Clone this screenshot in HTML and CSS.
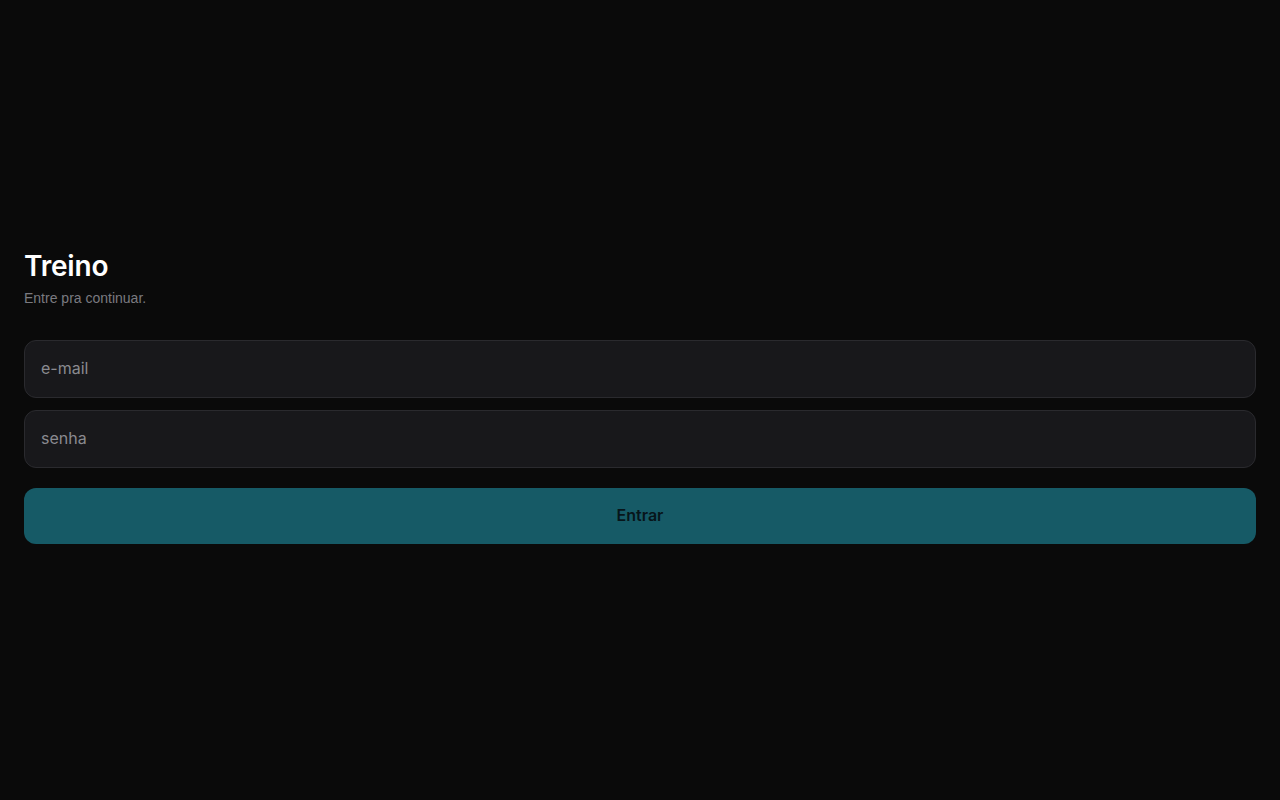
FILE: index.html
```html
<!DOCTYPE html>
<html lang="pt-BR">
<head>
<meta charset="utf-8">
<title>Treino</title>
<link rel="stylesheet" href="styles.css">
</head>
<body>
<main class="page">
  <div class="login">
    <h1 class="title">Treino</h1>
    <p class="subtitle">Entre pra continuar.</p>
    <form class="form">
      <input class="field" type="email" placeholder="e-mail">
      <input class="field" type="password" placeholder="senha">
      <button class="submit" type="button">Entrar</button>
    </form>
  </div>
</main>
</body>
</html>
```
FILE: styles.css
```css
* { box-sizing: border-box; }
html, body { margin: 0; padding: 0; }
body {
  background: #0a0a0a;
  color: #fafafa;
  font-family: Inter, "Liberation Sans", sans-serif;
}
.page {
  min-height: 100vh;
  display: flex;
  flex-direction: column;
  justify-content: center;
  padding: 24px 24px 36px;
}
.title {
  margin: 4px 0 0;
  font-family: Inter, "Liberation Sans", sans-serif;
  font-size: 28px;
  font-weight: 600;
  letter-spacing: -0.2px;
  line-height: 34px;
  color: #ffffff;
}
.subtitle {
  margin: 5px 0 0;
  font-family: "Liberation Sans", Arial, sans-serif;
  font-size: 14px;
  line-height: 20px;
  color: #7a7a80;
}
.form {
  margin-top: 32px;
  display: flex;
  flex-direction: column;
  gap: 12px;
}
.field {
  height: 58px;
  padding: 0 16px 2px;
  background: #18181b;
  border: 1px solid #2a2a2e;
  border-radius: 12px;
  color: #e4e4e7;
  font-family: Inter, sans-serif;
  font-size: 16px;
  outline: none;
}
.field::placeholder { color: #8a8a90; }
.submit {
  margin-top: 8px;
  height: 56px;
  padding: 0 0 2px;
  border: none;
  border-radius: 12px;
  background: #165a66;
  color: #07151a;
  font-family: Inter, sans-serif;
  font-size: 16px;
  font-weight: 600;
}
```
